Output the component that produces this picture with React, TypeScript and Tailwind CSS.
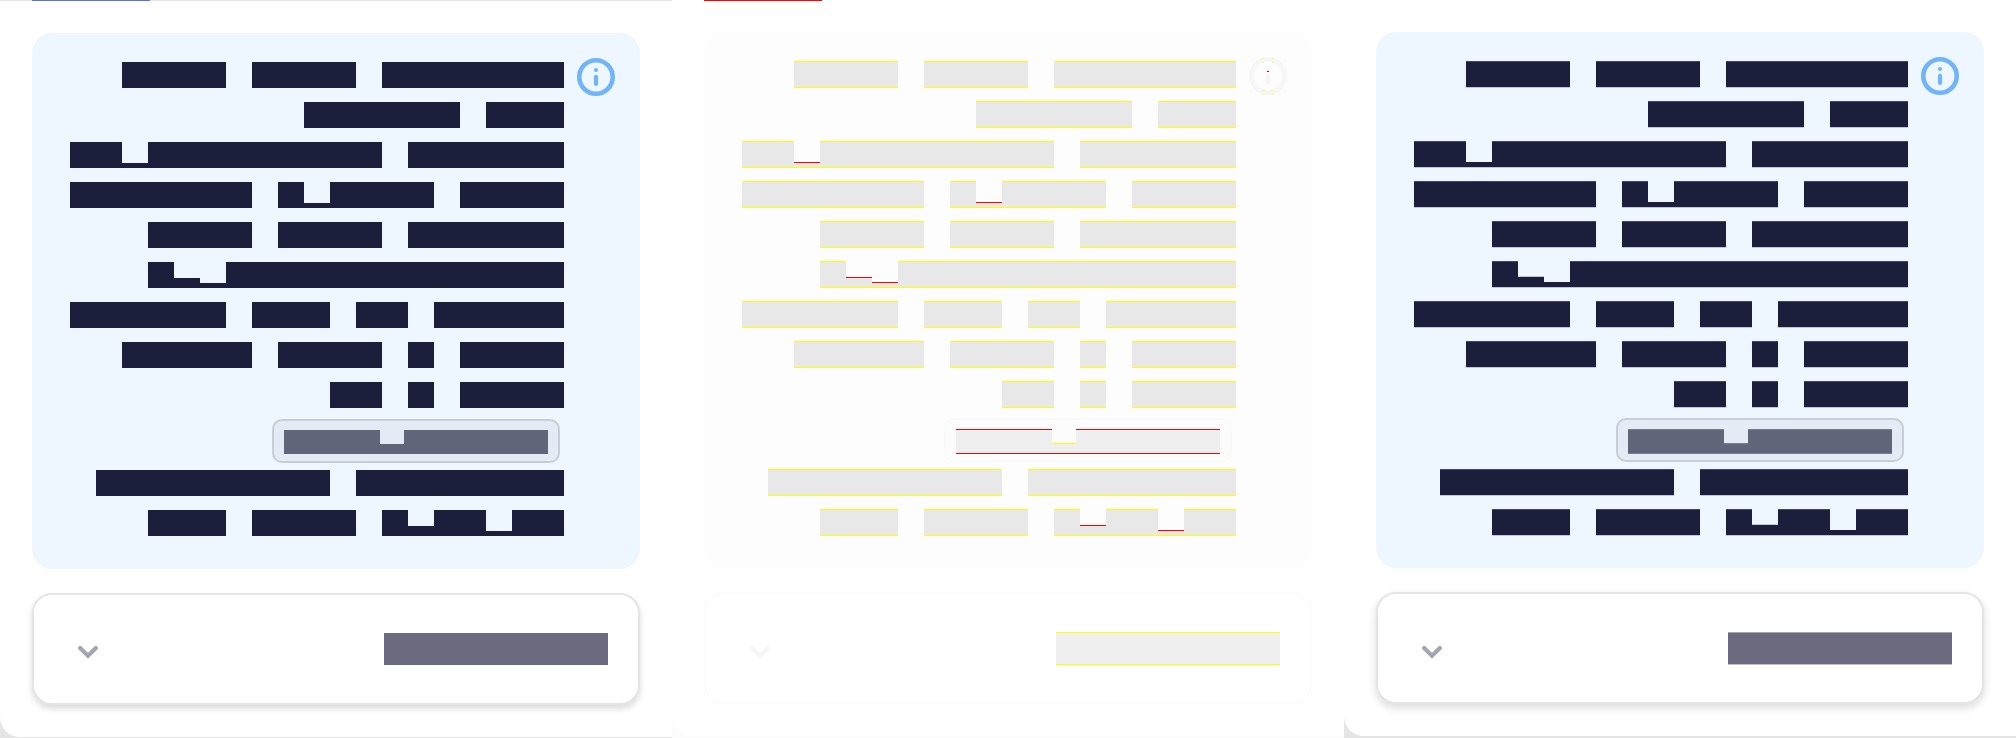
import React from 'react';

type Theme = {
  line: string;
  accent: string;
  panel: string;
  bar: string;
  icon: string;
  marks: boolean;
  chip: string;
  chipBar: string;
  card: string;
  cardBar: string;
  chevron: string;
  outer: string;
  high: string;
  low: string;
  chipHigh: string;
  notchEdge: string;
  notchOffset: string;
  deepNotchEdge: string;
  chipNotchEdge: string;
  cardHigh: string;
  cardLow: string;
  raised: boolean;
};

// One character is one 26px cell: X is full, c is cut by 16px, p is cut by 21px.
const rows = [
  'XXXX XXXX XXXXXXX',
  'XXXXXX XXX',
  'XXpXXXXXXXXX XXXXXX',
  'XXXXXXX XpXXXX XXXX',
  'XXXX XXXX XXXXXX',
  'XcpXXXXXXXXXXXXX',
  'XXXXXX XXX XX XXXXX',
  'XXXXX XXXX X XXXX',
  'XX X XXXX',
];
const tail = ['XXXXXXXXX XXXXXXXX', 'XXX XXXX XcXXpXX'];

function Row({ text, t }: { text: string; t: Theme }) {
  return (
    <div className={`flex justify-end ${t.raised ? 'h-[27px]' : 'h-[26px]'}`}>
      {text.split('').map((ch, i) => {
        if (ch === ' ') return <span key={i} className="w-[26px]" />;
        const top = ch === 'X' ? t.high : ch === 'c' ? t.notchEdge : t.deepNotchEdge;
        const offset = ch === 'X' ? '' : ch === 'c' ? t.notchOffset : 'mt-[21px]';
        return (
          <span key={i} className={`flex w-[26px] flex-col ${offset}`}>
            {t.raised && <span className={`h-px ${top}`} />}
            <span className={`flex-1 ${t.bar}`} />
            {t.raised && <span className={`h-px ${t.low}`} />}
          </span>
        );
      })}
    </div>
  );
}

function Info({ t }: { t: Theme }) {
  return (
    <svg viewBox="0 0 40 40" className={`h-10 w-10 ${t.icon}`} fill="none">
      <circle cx="20" cy="20" r="16.7" stroke="currentColor" strokeWidth="4.6" />
      <circle cx="20" cy="13" r="2.1" fill="currentColor" />
      <path d="M20 19.8v7.200" stroke="currentColor" strokeWidth="4.200" strokeLinecap="round" />
      {t.marks && (
        <>
          <path d="M19 15.5h2" stroke="#d00000" />
          <path d="M14 2.5h1M25 2.5h1M15 6.5h1M24 6.5h1M15 34.5h2M23 34.5h2M15 38.5h1M24 38.5h1" stroke="#ffff00" />
        </>
      )}
    </svg>
  );
}

function Screen({ t }: { t: Theme }) {
  return (
    <div className={`h-[738px] w-[672px] shrink-0 overflow-hidden ${t.outer}`}>
      <div className={`flex flex-col rounded-bl-[20px] bg-white ${t.raised ? 'h-[736px]' : 'h-[737px]'}`}>
        <div className={`h-px shrink-0 pl-8 ${t.line}`}>
          <div className={`h-px w-[118px] ${t.accent}`} />
        </div>
        <div className={`mx-8 h-[536px] shrink-0 rounded-[20px] ${t.panel} ${t.raised ? 'mt-[31px]' : 'mt-8'}`}>
          <div className="flex pt-[29px] pl-[38px]">
            <div className="w-[494px]">
              <div className={`flex flex-col ${t.raised ? 'gap-[13px]' : 'gap-[14px]'}`}>
                {rows.map((r, i) => <Row key={i} text={r} t={t} />)}
              </div>
              <div className={`ml-[202px] h-11 w-72 rounded-[10px] border-2 px-[10px] pt-[9px] ${t.chip} ${t.raised ? 'mt-[10px]' : 'mt-[11px]'}`}>
                <div className={`flex ${t.raised ? 'h-[25px]' : 'h-6'}`}>
                  {[96, 24, 144].map((w, i) => (
                    <div key={i} style={{ width: w }} className={`flex flex-col ${i === 1 ? 'pt-[14px]' : ''}`}>
                      {t.raised && <div className={`h-px ${i === 1 ? t.chipNotchEdge : t.chipHigh}`} />}
                      <div className={`flex-1 ${t.chipBar}`} />
                      {t.raised && <div className={`h-px ${t.chipHigh}`} />}
                    </div>
                  ))}
                </div>
              </div>
              <div className={`mt-[7px] flex flex-col ${t.raised ? 'gap-[13px]' : 'gap-[14px]'}`}>
                {tail.map((r, i) => <Row key={i} text={r} t={t} />)}
              </div>
            </div>
            <div className="-mt-[5px] ml-3">
              <Info t={t} />
            </div>
          </div>
        </div>
        <div className={`mx-8 mt-6 flex h-28 shrink-0 items-start justify-between rounded-[20px] border-2 pr-[30px] pl-[42px] ${t.card}`}>
          <svg viewBox="0 0 24 16" className={`h-4 w-6 ${t.chevron} ${t.raised ? 'mt-[50px]' : 'mt-[49px]'}`} fill="none">
            <path d="M4.100 4.100l7.900 7.700 7.900-7.700" stroke="currentColor" strokeWidth="4.200" strokeLinecap="round" />
          </svg>
          <div className={`mt-[38px] flex w-56 flex-col ${t.raised ? 'h-[33px]' : 'h-8'}`}>
            {t.raised && <div className={`h-px ${t.cardHigh}`} />}
            <div className={`flex-1 ${t.cardBar}`} />
            {t.raised && <div className={`h-px ${t.cardLow}`} />}
          </div>
        </div>
      </div>
    </div>
  );
}

const before: Theme = {
  line: 'bg-[#e5e5e5]', accent: 'bg-[#5b73d9]', panel: 'bg-[#eef6ff]', bar: 'bg-[#1b1f3b]',
  icon: 'text-[#70b5f9]', marks: false,
  chip: 'border-[#c8ced7] bg-[#e4ebf4]', chipBar: 'bg-[#60657a]',
  card: 'border-[#e5e5e5] bg-white shadow-[0_4px_6px_rgba(0,0,0,0.14)]', cardBar: 'bg-[#6a6b7e]',
  chevron: 'text-[#a4a5b1]', outer: 'bg-[#e5e5e5]',
  high: '', low: '', chipHigh: '', notchEdge: '', notchOffset: 'mt-4', deepNotchEdge: '',
  chipNotchEdge: '', cardHigh: '', cardLow: '', raised: false,
};

const diff: Theme = {
  ...before,
  line: 'bg-white', accent: 'bg-[#ff0000]', panel: 'bg-[#fdfdfd]', bar: 'bg-[#e8e8e8]',
  icon: 'text-[#f6f6f6]', marks: true,
  chip: 'border-[#fafafa] bg-[#fcfcfc]', chipBar: 'bg-[#efefef]',
  card: 'border-[#fcfcfc] bg-white shadow-[0_4px_8px_rgba(0,0,0,0.01)]', cardBar: 'bg-[#efefef]',
  chevron: 'text-[#f6f6f6]', outer: 'bg-[#fcfcfc]',
  high: 'bg-[#ffff00]', low: 'bg-[#ffff00]', chipHigh: 'bg-[#ff0000]', notchEdge: 'bg-[#ff0000]',
  deepNotchEdge: 'bg-[#ff0000]', chipNotchEdge: 'bg-[#ffff00]', cardHigh: 'bg-[#ffff00]',
  cardLow: 'bg-[#ffff00]', raised: true,
};

const after: Theme = {
  ...before,
  line: 'bg-white', accent: 'bg-white', raised: true,
  card: 'border-[#e5e5e5] bg-white shadow-[0_4px_8px_rgba(0,0,0,0.14)]',
  high: 'bg-[#414561]', low: 'bg-[#c0c5d9]', chipHigh: 'bg-[#797e90]', notchEdge: 'bg-[#bec3d1]',
  notchOffset: 'mt-[15px]', deepNotchEdge: 'bg-[#1b1f3b]', chipNotchEdge: 'bg-[#797e90]',
  cardHigh: 'bg-[#a5a6b2]', cardLow: 'bg-[#bfc0cc]',
};

export default function App() {
  return (
    <main className="flex h-[738px] w-[2016px] overflow-hidden bg-white">
      <Screen t={before} />
      <Screen t={diff} />
      <Screen t={after} />
    </main>
  );
}
